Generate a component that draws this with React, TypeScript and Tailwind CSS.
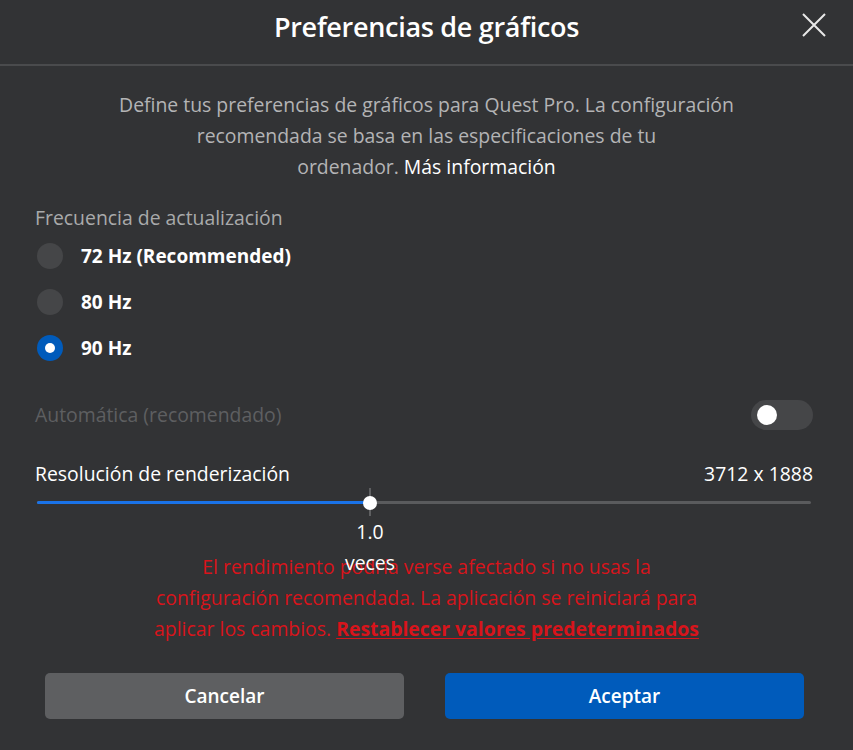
const font = { fontFamily: '"Open Sans", "Noto Sans", sans-serif' };

function Radio({ label, checked }: { label: string; checked?: boolean }) {
  return (
    <div className="flex h-[46px] items-center">
      {checked ? (
        <span className="grid h-[26px] w-[26px] place-items-center rounded-full bg-[#005bbb]">
          <span className="h-[10px] w-[10px] rounded-full bg-white" />
        </span>
      ) : (
        <span className="h-[26px] w-[26px] rounded-full bg-[#454648]" />
      )}
      <span className="ml-[18px] text-[19px] font-bold text-white">{label}</span>
    </div>
  );
}

export default function App() {
  const value = 43;

  return (
    <div className="min-h-[750px] w-[853px] bg-[#323335] text-white" style={font}>
      <header className="relative h-[66px] border-b-2 border-[#4a4b4d] pt-[10px] text-center">
        <h1 className="text-[27px] font-semibold leading-[34px] tracking-[-0.3px]">Preferencias de gráficos</h1>
        <button type="button" className="absolute left-[802px] top-[13px] text-[#e8e8e8]" aria-label="Cerrar">
          <svg width="24" height="24" viewBox="0 0 24 24" fill="none" stroke="currentColor" strokeWidth="2">
            <path d="M1 1 L23 23 M23 1 L1 23" />
          </svg>
        </button>
      </header>

      <p className="pt-[23px] text-center text-[19.4px] leading-[31px] text-[#b4b4b5]">
        Define tus preferencias de gráficos para Quest Pro. La configuración
        <br />
        recomendada se basa en las especificaciones de tu
        <br />
        ordenador. <span className="text-white">Más información</span>
      </p>

      <div className="pl-[35px] pr-[40px]">
        <p className="mt-[20px] text-[19.4px] leading-[31px] text-[#a9aaab]">Frecuencia de actualización</p>
        <div className="ml-[2px]">
          <Radio label="72 Hz (Recommended)" />
          <Radio label="80 Hz" />
          <Radio label="90 Hz" checked />
        </div>

        <div className="mt-[29px] flex h-[30px] items-center justify-between">
          <span className="text-[19.4px] text-[#5e5f61]">Automática (recomendado)</span>
          <span className="flex h-[30px] w-[62px] items-center rounded-full bg-[#454648] pl-[6px]">
            <span className="h-[20px] w-[20px] rounded-full bg-white" />
          </span>
        </div>

        <div className="mt-[30px] flex h-[28px] items-center justify-between text-[19.4px]">
          <span>Resolución de renderización</span>
          <span>3712 x 1888</span>
        </div>

        <div className="relative h-[28px]">
          <div className="absolute left-[2px] right-[2px] top-[13px] h-[3px] rounded-full bg-[#5a5b5d]" />
          <div
            className="absolute left-[2px] top-[13px] h-[3px] rounded-full bg-[#1a73e8]"
            style={{ width: `${value}%` }}
          />
          <div className="absolute left-[334px] top-0 h-[28px] w-[2px] bg-[#5e5f61]" />
          <div className="absolute left-[328px] top-[8px] h-[14px] w-[14px] rounded-full bg-white" />
          <div className="absolute left-[300px] top-[28px] z-10 w-[70px] text-center text-[19.4px] leading-[31px] text-white">
            1.0
            <br />
            veces
          </div>
        </div>
      </div>

      <p className="mt-[35px] text-center text-[19.4px] leading-[31px] text-[#d8141b]">
        El rendimiento podría verse afectado si no usas la
        <br />
        configuración recomendada. La aplicación se reiniciará para
        <br />
        aplicar los cambios.{" "}
        <a className="font-bold underline underline-offset-2" href="#">
          Restablecer valores predeterminados
        </a>
      </p>

      <div className="mt-[29px] flex gap-[41px] pl-[45px] pr-[49px]">
        <button type="button" className="h-[46px] flex-1 rounded-[5px] bg-[#5e5f61] text-[19px] font-semibold">
          Cancelar
        </button>
        <button type="button" className="h-[46px] flex-1 rounded-[5px] bg-[#005bbb] text-[19px] font-semibold">
          Aceptar
        </button>
      </div>
    </div>
  );
}
